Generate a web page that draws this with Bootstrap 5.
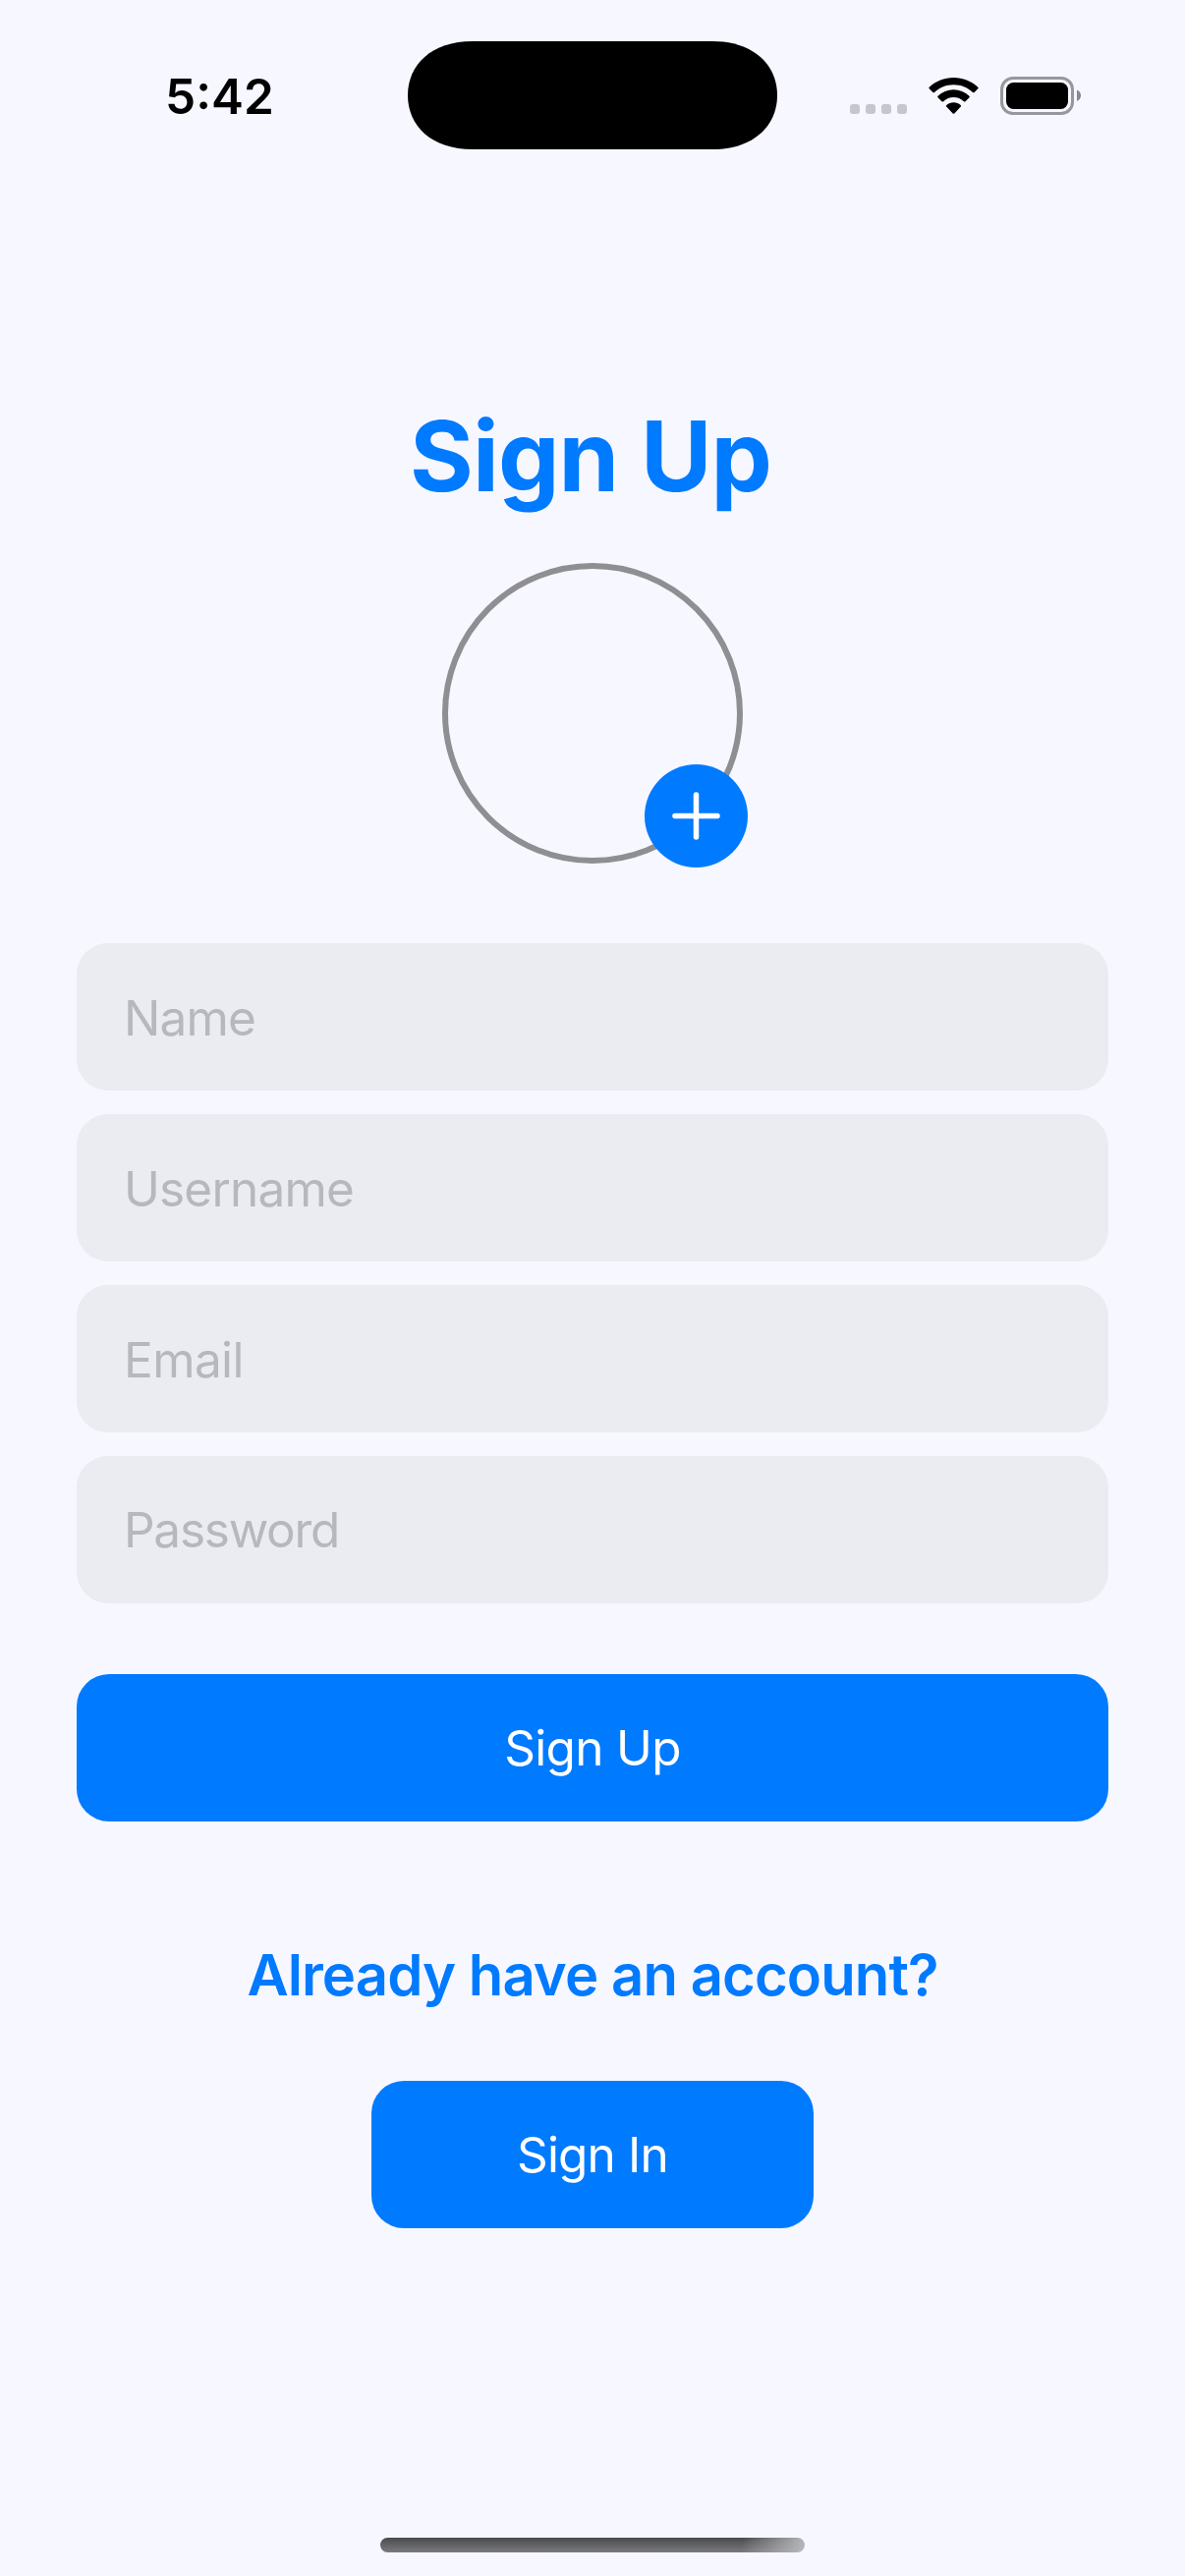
<!DOCTYPE html>
<html lang="en">
<head>
<meta charset="utf-8">
<meta name="viewport" content="width=device-width, initial-scale=1">
<title>Sign Up</title>
<link href="https://cdn.jsdelivr.net/npm/bootstrap@5.3.0/dist/css/bootstrap.min.css" rel="stylesheet">
<style>
  body { background: #f7f7ff; font-family: Inter, "Liberation Sans", sans-serif; }
  .screen { width: 1206px; height: 2622px; }
  .statusbar { height: 194px; padding: 42px 106px 0 168px; }
  .clock { font-size: 49.5px; line-height: 60px; font-weight: 570; letter-spacing: 0; color: #000; width: 247px; margin-top: 26px; }
  .status-icons { margin-top: 36px; }
  .title { font-size: 99px; line-height: 120px; font-weight: 700; letter-spacing: -.87px; color: #007aff; margin-top: 210px; padding-right: 4px; }
  .avatar { width: 306px; height: 306px; border: 6px solid #8e8e93; margin-top: 49px; }
  .add-btn { width: 105px; height: 105px; right: -11px; bottom: -10px; background: #007aff; }
  .signup-form { padding: 0 78px; margin-top: 81px; }
  .fields { gap: 24px; }
  .form-control.field, .form-control.field:focus { height: 150px; border: 0; border-radius: 32px; padding: 2px 48px 0; background: #ebecf1; box-shadow: none; font-size: 49.5px; letter-spacing: -.8px; }
  .form-control.field::placeholder { color: #b7b8bd; opacity: 1; }
  .form-control.field[type="email"] { letter-spacing: -.6px; }
  .form-control.field[type="password"] { letter-spacing: -1.25px; padding-top: 0; }
  .btn.action { height: 150px; border: 0; border-radius: 33px; background: #007aff; font-size: 49.5px; letter-spacing: -.7px; }
  .signup { margin-top: 72px; }
  .question { font-size: 58px; line-height: 70px; font-weight: 600; letter-spacing: -.91px; color: #007aff; margin-top: 121px; }
  .btn.signin { width: 450px; margin-top: 73px; letter-spacing: -.84px; }
  .home-bar { width: 432px; height: 15px; margin-bottom: 24px; background: linear-gradient(100deg, transparent 85%, #b8b8be 100%), linear-gradient(#4b4b4f, #7a7a7e); }
</style>
</head>
<body>
<div class="screen d-flex flex-column align-items-center overflow-hidden">
  <header class="statusbar w-100 d-flex align-items-start">
    <div class="clock">5:42</div>
    <svg width="376" height="110" viewBox="0 0 376 110" aria-hidden="true"><path d="M66 0H310C352 0 376 24 376 55S352 110 310 110H66C24 110 0 86 0 55S24 0 66 0Z"/></svg>
    <svg class="status-icons ms-auto" width="235" height="39" viewBox="865 78 235 39" aria-hidden="true">
      <g fill="#c7c6cc">
        <rect x="865" y="106" width="10" height="10" rx="3"/>
        <rect x="881" y="106" width="10" height="10" rx="3"/>
        <rect x="897" y="106" width="10" height="10" rx="3"/>
        <rect x="913" y="106" width="10" height="10" rx="3"/>
      </g>
      <path d="M970.5 79C979.8 79 988.6 82.500 995.300 88.700Q996 89.400 995.300 90.200L991.600 94Q990.800 94.700 990 94C984.700 89 977.800 86.300 970.500 86.300S956.300 89 951 94Q950.200 94.700 949.400 94L945.700 90.200Q945 89.400 945.700 88.700C952.400 82.500 961.200 79 970.500 79Z"/>
      <path d="M970.500 91.300C976.500 91.300 982.100 93.600 986.500 97.700Q987.200 98.500 986.500 99.200L982.500 103.200Q981.700 103.900 980.900 103.200C978 100.500 974.400 99 970.500 99S963 100.500 960.100 103.200Q959.300 103.900 958.500 103.200L954.500 99.200Q953.800 98.500 954.500 97.700C958.900 93.600 964.500 91.300 970.500 91.300Z"/>
      <path d="M970.500 104.200C973.200 104.200 975.700 105.200 977.700 106.900Q978.500 107.700 977.800 108.500L971.300 115.400Q970.500 116.100 969.700 115.400L963.200 108.500Q962.500 107.700 963.300 106.900C965.300 105.200 967.800 104.200 970.500 104.200Z"/>
      <rect x="1019.500" y="79.500" width="72" height="36" rx="11.500" fill="none" stroke="#98979d" stroke-width="3"/>
      <rect x="1024" y="84" width="63" height="27" rx="7.500"/>
      <path d="M1096 91.500C1098.500 92.500 1100 94.700 1100 97.300S1098.500 102 1096 103Z" fill="#88878c"/>
    </svg>
  </header>

  <h1 class="title mb-0">Sign Up</h1>

  <div class="avatar rounded-circle position-relative">
    <button type="button" class="add-btn btn rounded-circle border-0 p-0 position-absolute d-flex align-items-center justify-content-center" aria-label="Add photo">
      <svg width="49" height="49" viewBox="0 0 49 49" fill="none" stroke="#fff" stroke-width="5.500" stroke-linecap="round"><path d="M24.500 3V46M3 24.500H46"/></svg>
    </button>
  </div>

  <form class="signup-form w-100">
    <div class="fields d-flex flex-column">
      <input type="text" class="form-control field" placeholder="Name">
      <input type="text" class="form-control field" placeholder="Username">
      <input type="email" class="form-control field" placeholder="Email">
      <input type="password" class="form-control field" placeholder="Password">
    </div>
    <button type="button" class="btn btn-primary action signup w-100">Sign Up</button>
  </form>

  <h2 class="question mb-0">Already have an account?</h2>
  <button type="button" class="btn btn-primary action signin">Sign In</button>

  <div class="home-bar rounded-pill mt-auto"></div>
</div>
<script src="https://cdn.jsdelivr.net/npm/bootstrap@5.3.0/dist/js/bootstrap.bundle.min.js"></script>
</body>
</html>
